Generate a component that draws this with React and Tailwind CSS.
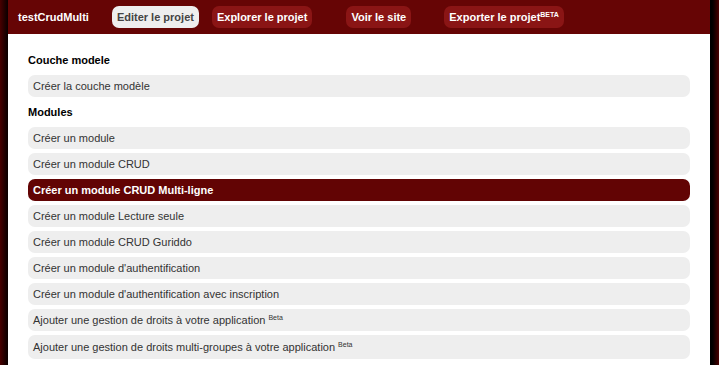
const NAV = [
  { label: 'Editer le projet', active: true, cls: 'ml-[23px]' },
  { label: 'Explorer le projet', cls: 'ml-[13px]' },
  { label: 'Voir le site', cls: 'ml-[34px]' },
  { label: 'Exporter le projet', beta: true, cls: 'ml-[33px]' },
];

const ROWS = [
  { type: 'title', label: 'Couche modele' },
  { label: 'Créer la couche modèle' },
  { type: 'title', label: 'Modules' },
  { label: 'Créer un module' },
  { label: 'Créer un module CRUD' },
  { label: 'Créer un module CRUD Multi-ligne', active: true },
  { label: 'Créer un module Lecture seule' },
  { label: 'Créer un module CRUD Guriddo' },
  { label: "Créer un module d'authentification" },
  { label: "Créer un module d'authentification avec inscription" },
  { label: 'Ajouter une gestion de droits à votre application', beta: true },
  { label: 'Ajouter une gestion de droits multi-groupes à votre application', beta: true, tall: true },
];

export default function App() {
  return (
    <div className="flex h-[365px] w-[719px] overflow-hidden bg-white font-['Liberation_Sans',Arial,sans-serif] text-[11px]">
      {/* side shadows */}
      <div className="w-[8px] shrink-0 bg-gradient-to-r from-[#4a0000] to-[#0a0000]" />

      <div className="flex min-w-0 flex-1 flex-col">
        {/* top bar */}
        <div className="flex h-[34px] shrink-0 items-center bg-[#660505] pl-[10px]">
          <span className="font-bold text-white">testCrudMulti</span>
          {NAV.map((n) => (
            <span
              key={n.label}
              className={`${n.cls} flex h-[22px] items-center rounded-[7px] px-[5px] font-bold ${
                n.active ? 'bg-[#eeeeee] text-[#444444]' : 'bg-[#8a1515] text-white'
              }`}
            >
              {n.label}
              {n.beta && <sup className="relative -top-[3px] text-[7px] leading-none">BETA</sup>}
            </span>
          ))}
        </div>

        {/* content */}
        <div className="flex flex-col gap-[4px] px-[20px] pt-[15px]">
          {ROWS.map((r) =>
            r.type === 'title' ? (
              <div key={r.label} className="flex h-[22px] items-center font-bold text-black">
                {r.label}
              </div>
            ) : (
              <div
                key={r.label}
                className={`flex ${r.tall ? 'h-[24px]' : 'h-[22px]'} items-center rounded-[7px] px-[5px] ${
                  r.active ? 'bg-[#620404] font-bold text-white' : 'bg-[#eeeeee] text-[#333333]'
                }`}
              >
                {r.label}
                {r.beta && <sup className="relative -top-[3px] ml-[3px] text-[7px] leading-none">Beta</sup>}
              </div>
            )
          )}
        </div>
      </div>

      <div className="w-[9px] shrink-0 bg-gradient-to-r from-[#000000] to-[#4a0000]" />
    </div>
  );
}
